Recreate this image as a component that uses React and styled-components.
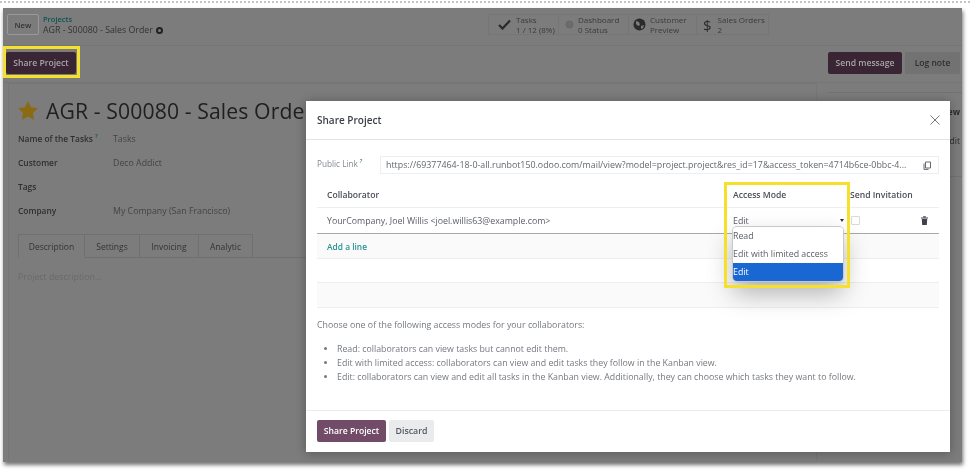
import React from 'react';
import styled, {createGlobalStyle} from 'styled-components';

const GlobalStyle = createGlobalStyle`
  html, body {
    margin: 0;
    padding: 0;
    background: #fff;
  }
  body {
    font-family: "Open Sans", "Noto Sans", sans-serif;
    overflow: hidden;
  }
`

const Page = styled.div`
  position: relative;
  width: 970px;
  height: 471px;
  background: #fff;
  overflow: hidden;
  filter: blur(0.7px);
`
const DottedEdge = styled.div`
  height: 0;
  margin-top: 1px;
  border-top: 2px dotted #c4c4c4;
`
const Shot = styled.div`
  position: relative;
  width: 959px;
  height: 454px;
  margin: 5px 0 0 3px;
  background: #7c7c7c;
  box-shadow: 1px 3px 4px rgba(0,0,0,.55);
  color: #2b2b2b;
  font-size: 8.8px;
`
const ControlPanel = styled.div`
  display: flex;
  align-items: flex-start;
  height: 38px;
  box-sizing: border-box;
  padding: 6px 0 0 4px;
  border-bottom: 1px solid #757575;
`
const NewButton = styled.div`
  display: flex;
  align-items: center;
  justify-content: center;
  width: 32px;
  height: 21px;
  box-sizing: border-box;
  border: 1px solid #999;
  border-radius: 2px;
  color: #333;
  font-size: 7.8px;
  font-weight: 600;
`
const Crumbs = styled.div`
  margin-left: 4px;
  width: 445px;
  line-height: 11px;
  font-size: 8.8px;
  color: #333;
`
const CrumbLink = styled.div`
  color: #0d5450;
  font-size: 7.5px;
  font-weight: 600;
`
const Stats = styled.div`
  display: flex;
  height: 21px;
  box-sizing: border-box;
  border: 1px solid #767676;
`
const Stat = styled.div`
  display: flex;
  align-items: center;
  width: ${props => props.w}px;
  padding-left: ${props => props.pad}px;
  gap: ${props => props.gap}px;
  box-sizing: border-box;
  border-left: ${props => props.first ? 'none' : '1px solid #767676'};
`
const StatText = styled.div`
  font-size: 8px;
  line-height: 9.5px;
  color: #3a3a3a;
  white-space: nowrap;
`
const Dollar = styled.span`
  font-size: 15px;
  color: #2b2b2b;
`
const ActionBar = styled.div`
  display: flex;
  align-items: center;
  justify-content: space-between;
  height: 37px;
  padding: 0 2px 3px 3px;
  box-sizing: border-box;
  border-bottom: 1px solid #767676;
`
const DarkButton = styled.div`
  display: flex;
  align-items: center;
  justify-content: center;
  width: ${props => props.w}px;
  height: 22px;
  border-radius: 2px;
  background: #3a2535;
  color: #aaa4a9;
  font-size: 8.6px;
  font-weight: 600;
`
const GreyButton = styled.div`
  display: flex;
  align-items: center;
  justify-content: center;
  width: 55px;
  height: 22px;
  border-radius: 2px;
  background: #727272;
  color: #2e2e2e;
  font-size: 8.5px;
  font-weight: 600;
`
const ChatButtons = styled.div`
  display: flex;
  gap: 3px;
`
const Body = styled.div`
  display: flex;
  height: 378px;
`
const Sheet = styled.div`
  width: 809px;
  margin-left: 5px;
  border: 1px solid #767676;
  border-bottom: none;
  box-sizing: border-box;
  padding: 12px 0 0 9px;
`
const Chatter = styled.div`
  flex: 1;
  margin: 9px 0 0 11px;
  border-top: 1px solid #727272;
  font-size: 8.6px;
  color: #2b2b2b;
`
const ChatterRow = styled.div`
  display: flex;
  align-items: center;
  justify-content: flex-end;
  height: ${props => props.h}px;
  padding-right: 2px;
  font-weight: ${props => props.bold ? 700 : 400};
  border-bottom: ${props => props.line ? '1px solid #727272' : 'none'};
`
const Title = styled.div`
  display: flex;
  align-items: center;
  gap: 8px;
  height: 28px;
  font-size: 21.2px;
  letter-spacing: .1px;
  color: #1f1f1f;
  white-space: nowrap;
`
const Fields = styled.div`
  display: grid;
  grid-template-columns: 95px 1fr;
  grid-auto-rows: 24px;
  align-items: center;
  margin-top: 2px;
`
const FieldLabel = styled.div`
  font-size: 8.4px;
  font-weight: 600;
  color: #2f2f2f;
`
const FieldValue = styled.div`
  padding-top: 2px;
  color: #444;
`
const Help = styled.sup`
  font-size: 6px;
  line-height: 0;
  color: #0d5450;
  margin-left: 2px;
`
const Tabs = styled.div`
  display: flex;
  height: 23px;
  margin-top: 12px;
  border-bottom: 1px solid #707070;
  font-size: 8.5px;
`
const Tab = styled.div`
  display: flex;
  align-items: center;
  justify-content: center;
  width: ${props => props.w}px;
  box-sizing: border-box;
  border: 1px solid #707070;
  border-left: ${props => props.first ? '1px solid #707070' : 'none'};
  border-bottom: ${props => props.active ? '1px solid #7c7c7c' : '1px solid #707070'};
  margin-bottom: -1px;
  color: #333;
`
const Placeholder = styled.div`
  margin-top: 13px;
  color: #6a6a6a;
`
const Modal = styled.div`
  position: absolute;
  left: 303px;
  top: 93px;
  width: 644px;
  height: 351px;
  display: flex;
  flex-direction: column;
  background: #fff;
  box-shadow: 0 1px 10px rgba(0,0,0,.3);
  color: #5a5e65;
`
const ModalHead = styled.div`
  display: flex;
  align-items: center;
  justify-content: space-between;
  height: 38px;
  flex: none;
  padding: 0 10px 0 11px;
  border-bottom: 1px solid #e4e4e4;
`
const ModalTitle = styled.div`
  font-size: 10px;
  font-weight: 600;
  color: #3b3f46;
`
const ModalBody = styled.div`
  flex: 1;
  padding: 15px 11px 0;
`
const LinkRow = styled.div`
  display: flex;
  align-items: center;
  height: 20px;
`
const LinkLabel = styled.div`
  width: 63px;
  margin-top: -4px;
  font-size: 8.2px;
  color: #85898f;
`
const LinkBox = styled.div`
  display: flex;
  align-items: center;
  justify-content: space-between;
  flex: 1;
  height: 18px;
  padding: 0 6px 0 5px;
  border: 1px solid #eceef0;
  box-sizing: border-box;
  font-size: 8.85px;
  white-space: nowrap;
  color: #63676d;
`
const TableRow = styled.div`
  display: grid;
  grid-template-columns: 406px 117px 71px 1fr;
  align-items: center;
  height: ${props => props.h}px;
  padding: ${props => props.top || 0}px 0 0 10px;
  background: ${props => props.shade ? '#fafafa' : '#fff'};
  border-bottom: ${props => props.line || '1px solid #eeeeee'};
  box-sizing: border-box;
`
const HeadCell = styled.div`
  font-size: 8.6px;
  font-weight: 600;
  color: #4a4e55;
  white-space: nowrap;
`
const AddLine = styled.div`
  font-size: 8.4px;
  color: #2a9393;
  font-weight: 600;
`
const SelectCell = styled.div`
  display: flex;
  align-items: center;
  justify-content: space-between;
  padding-right: 6px;
`
const Caret = styled.span`
  width: 0;
  height: 0;
  border: 2px solid transparent;
  border-top: 3px solid #333;
  border-bottom: none;
`
const Check = styled.span`
  display: block;
  width: 7px;
  height: 7px;
  margin-left: 1px;
  border: 1px solid #d9d9d9;
  border-radius: 1px;
`
const Notes = styled.div`
  margin-top: 11px;
  color: #75797f;
`
const NoteList = styled.ul`
  margin: 11px 0 0;
  padding: 0 0 0 20px;
  line-height: 14px;
  li::marker {
    font-size: 8px;
  }
`
const ModalFoot = styled.div`
  display: flex;
  align-items: flex-start;
  gap: 3px;
  height: 42px;
  flex: none;
  box-sizing: border-box;
  padding: 9px 11px 0;
  border-top: 1px solid #ececec;
`
const PrimaryButton = styled.div`
  display: flex;
  align-items: center;
  justify-content: center;
  width: 69px;
  height: 22px;
  border-radius: 2px;
  background: #714b67;
  color: #fff;
  font-size: 8.6px;
  font-weight: 600;
`
const SecondaryButton = styled.div`
  display: flex;
  align-items: center;
  justify-content: center;
  width: 45px;
  height: 22px;
  border-radius: 2px;
  background: #e9ebed;
  color: #55595f;
  font-size: 8.8px;
  font-weight: 600;
`
const YellowFrame = styled.div`
  position: absolute;
  left: ${props => props.x}px;
  top: ${props => props.y}px;
  width: ${props => props.w}px;
  height: ${props => props.h}px;
  box-sizing: border-box;
  border: 3px solid #f5e02c;
  pointer-events: none;
`
const Dropdown = styled.div`
  position: absolute;
  left: 730px;
  top: 219px;
  width: 110px;
  background: #fff;
  border-radius: 4px;
  box-shadow: 0 0 0 1px #c9c9c9, 0 12px 26px rgba(0,0,0,.3);
  overflow: hidden;
`
const Option = styled.div`
  display: flex;
  align-items: center;
  height: 18px;
  background: ${props => props.selected ? '#1967d2' : '#fff'};
  color: ${props => props.selected ? '#fff' : '#5a5e65'};
`
const GearMark = styled.svg`
  margin-left: 3px;
  vertical-align: -1px;
`

const GearIcon = () => (
  <GearMark width="7" height="7" viewBox="0 0 7 7">
    <circle cx="3.500" cy="3.500" r="2.500" fill="none" stroke="#222" strokeWidth="2"/>
  </GearMark>
)
const CheckIcon = () => (
  <svg width="13" height="11" viewBox="0 0 13 11">
    <path d="M1 6l3.5 3.5L12 1.5" fill="none" stroke="#2a2a2a" strokeWidth="2.2"/>
  </svg>
)
const DotIcon = () => (
  <svg width="9" height="9" viewBox="0 0 9 9">
    <circle cx="4.500" cy="4.500" r="3.500" fill="#6c6c6c" stroke="#666"/>
  </svg>
)
const GlobeIcon = () => (
  <svg width="13" height="13" viewBox="0 0 13 13">
    <circle cx="6.500" cy="6.500" r="6" fill="#2b2b2b"/>
    <path d="M3 3l3 1 1 3-2 1-2-2zM8 8l3-1-1 3-2 1z" fill="#7c7c7c"/>
  </svg>
)
const CopyIcon = () => (
  <svg width="9" height="9" viewBox="0 0 9 9" fill="none" stroke="#55595f" strokeWidth=".9">
    <path d="M2.500 1h5v6h-5z"/>
    <path d="M1 2.500V8.400h4.500"/>
  </svg>
)
const TrashIcon = () => (
  <svg width="7" height="9" viewBox="0 0 7 9">
    <path d="M0 1.500h7v1H0zM2.200.3h2.600v1H2.200zM.8 3h5.400l-.4 6H1.200z" fill="#3f4248"/>
  </svg>
)
const CloseIcon = () => (
  <svg width="10" height="10" viewBox="0 0 10 10">
    <path d="M.5.5l9 9M9.500.5l-9 9" stroke="#777" strokeWidth="1"/>
  </svg>
)
const StarIcon = () => (
  <svg width="20" height="19" viewBox="0 0 20 19">
    <path d="M10 0l3 6.300 7 .9-5.100 4.800 1.300 7L10 15.600 3.800 19l1.300-7L0 7.200l7-.9z" fill="#8a6a12"/>
  </svg>
)

const App = () => {
  return(
    <Page>
      <GlobalStyle/>
      <DottedEdge/>
      <Shot>
        <ControlPanel>
          <NewButton>New</NewButton>
          <Crumbs>
            <CrumbLink>Projects</CrumbLink>
            AGR - S00080 - Sales Order<GearIcon/>
          </Crumbs>
          <Stats>
            <Stat first w={69} pad={9} gap={5}><CheckIcon/><StatText>Tasks<br/>1 / 12 (8%)</StatText></Stat>
            <Stat w={70} pad={6} gap={4}><DotIcon/><StatText>Dashboard<br/>0 Status</StatText></Stat>
            <Stat w={68} pad={4} gap={4}><GlobeIcon/><StatText>Customer<br/>Preview</StatText></Stat>
            <Stat w={72} pad={6} gap={6}><Dollar>$</Dollar><StatText>Sales Orders<br/>2</StatText></Stat>
          </Stats>
        </ControlPanel>
        <ActionBar>
          <DarkButton w={70}>Share Project</DarkButton>
          <ChatButtons>
            <DarkButton w={74}>Send message</DarkButton>
            <GreyButton>Log note</GreyButton>
          </ChatButtons>
        </ActionBar>
        <Body>
          <Sheet>
            <Title><StarIcon/>AGR - S00080 - Sales Order</Title>
            <Fields>
              <FieldLabel>Name of the Tasks<Help>?</Help></FieldLabel><FieldValue>Tasks</FieldValue>
              <FieldLabel>Customer</FieldLabel><FieldValue>Deco Addict</FieldValue>
              <FieldLabel>Tags</FieldLabel><FieldValue/>
              <FieldLabel>Company</FieldLabel><FieldValue>My Company (San Francisco)</FieldValue>
            </Fields>
            <Tabs>
              <Tab first active w={67}>Description</Tab>
              <Tab w={55}>Settings</Tab>
              <Tab w={59}>Invoicing</Tab>
              <Tab w={54}>Analytic</Tab>
            </Tabs>
            <Placeholder>Project description...</Placeholder>
          </Sheet>
          <Chatter>
            <ChatterRow h={38} bold>View</ChatterRow>
            <ChatterRow h={20}>Edit</ChatterRow>
            <ChatterRow h={25} line/>
          </Chatter>
        </Body>
        <Modal>
          <ModalHead>
            <ModalTitle>Share Project</ModalTitle>
            <CloseIcon/>
          </ModalHead>
          <ModalBody>
            <LinkRow>
              <LinkLabel>Public Link<Help>?</Help></LinkLabel>
              <LinkBox>
                https://69377464-18-0-all.runbot150.odoo.com/mail/view?model=project.project&res_id=17&access_token=4714b6ce-0bbc-4...
                <CopyIcon/>
              </LinkBox>
            </LinkRow>
            <TableRow h={33} top={7}>
              <HeadCell>Collaborator</HeadCell>
              <HeadCell>Access Mode</HeadCell>
              <HeadCell>Send Invitation</HeadCell>
              <span/>
            </TableRow>
            <TableRow h={26} line="1px solid #a8a8a8">
              <div>YourCompany, Joel Willis &lt;joel.willis63@example.com&gt;</div>
              <SelectCell>Edit<Caret/></SelectCell>
              <Check/>
              <TrashIcon/>
            </TableRow>
            <TableRow h={25} shade>
              <AddLine>Add a line</AddLine>
            </TableRow>
            <TableRow h={24}/>
            <TableRow h={25} shade/>
            <Notes>
              Choose one of the following access modes for your collaborators:
              <NoteList>
                <li>Read: collaborators can view tasks but cannot edit them.</li>
                <li>Edit with limited access: collaborators can view and edit tasks they follow in the Kanban view.</li>
                <li>Edit: collaborators can view and edit all tasks in the Kanban view. Additionally, they can choose which tasks they want to follow.</li>
              </NoteList>
            </Notes>
          </ModalBody>
          <ModalFoot>
            <PrimaryButton>Share Project</PrimaryButton>
            <SecondaryButton>Discard</SecondaryButton>
          </ModalFoot>
        </Modal>
        <Dropdown>
          <Option>Read</Option>
          <Option>Edit with limited access</Option>
          <Option selected>Edit</Option>
        </Dropdown>
        <YellowFrame x={0} y={38} w={77} h={32}/>
        <YellowFrame x={721} y={174} w={126} h={106}/>
      </Shot>
    </Page>
  )
}

export default App;
